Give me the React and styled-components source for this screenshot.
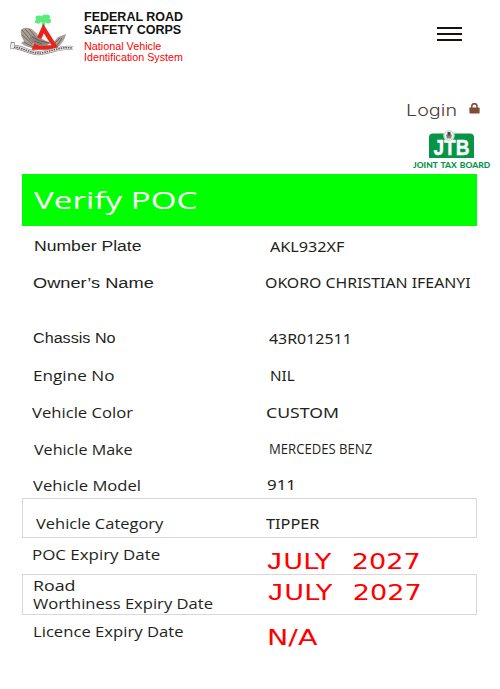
import React, { useLayoutEffect, useRef, useState } from "react";
import styled, { createGlobalStyle } from "styled-components";

const SANS = '"Open Sans", "Noto Sans", sans-serif';
const HUMANIST = '"Noto Sans", "Open Sans", sans-serif';
const ARIAL = '"Liberation Sans", Arial, sans-serif';
const WIDE = '"DejaVu Sans", Verdana, sans-serif';

const rows = [
  {
    height: 37,
    label: { text: "Number Plate", left: 11, top: 9, width: 108, font: ARIAL },
    value: { text: "AKL932XF", left: 17, top: 10, width: 74 },
  },
  {
    height: 55,
    label: { text: "Owner’s Name", left: 10, top: 9, width: 121, font: ARIAL },
    value: { text: "OKORO CHRISTIAN IFEANYI", left: 12, top: 9, width: 206 },
  },
  {
    height: 37,
    label: { text: "Chassis No", left: 10, top: 9, width: 83, font: ARIAL },
    value: { text: "43R012511", left: 16, top: 10, width: 83 },
  },
  {
    height: 37,
    label: { text: "Engine No", left: 10, top: 10, width: 82 },
    value: { text: "NIL", left: 17, top: 10, width: 25 },
  },
  {
    height: 37,
    label: { text: "Vehicle Color", left: 9, top: 10, width: 101 },
    value: { text: "CUSTOM", left: 13, top: 10, width: 73 },
  },
  {
    height: 37,
    label: { text: "Vehicle Make", left: 11, top: 10, width: 99 },
    value: { text: "MERCEDES BENZ", left: 16, top: 9, width: 103, font: SANS },
  },
  {
    height: 32,
    label: { text: "Vehicle Model", left: 10, top: 9, width: 108 },
    value: { text: "911", left: 14, top: 8, width: 29 },
  },
  {
    height: 40,
    boxed: true,
    label: { text: "Vehicle Category", left: 13, top: 15, width: 127 },
    value: { text: "TIPPER", left: 13, top: 15, width: 53, size: 13.5 },
  },
  {
    height: 36,
    label: { text: "POC Expiry Date", left: 9, top: 6, width: 128 },
    value: { text: "JULY 2027", left: 12, top: 13, width: 156, date: true },
  },
  {
    height: 41,
    boxed: true,
    label: { text: "Road", left: 10, top: 1, width: 42 },
    label2: { text: "Worthiness Expiry Date", left: 10, top: -2, width: 180 },
    value: { text: "JULY 2027", left: 13, top: 8, width: 156, date: true },
  },
  {
    height: 40,
    label: { text: "Licence Expiry Date", left: 10, top: 6, width: 151 },
    value: { text: "N/A", left: 14, top: 12, width: 50, alert: true, size: 20.5, font: WIDE },
  },
];

// stretches a single line of text to the given width
const FitText = ({ width, children, ...rest }) => {
  const ref = useRef(null);
  const [scale, setScale] = useState(1);

  useLayoutEffect(() => {
    setScale(width / ref.current.offsetWidth);
  }, [width]);

  return (
    <StyledFit $width={width} {...rest}>
      <StyledFitInner ref={ref} style={{ transform: `scaleX(${scale})` }}>
        {children}
      </StyledFitInner>
    </StyledFit>
  );
};

const Cell = ({ item, label }) => (
  <StyledCell
    width={item.width}
    $left={item.left}
    $top={item.top}
    $size={item.size || (item.date ? 21 : 14)}
    $font={item.font || (item.date ? WIDE : label ? SANS : HUMANIST)}
    $alert={item.alert || item.date}
  >
    {item.date ? (
      <>
        <StyledJ>J</StyledJ>ULY<StyledGap />2027
      </>
    ) : (
      item.text
    )}
  </StyledCell>
);

const Crest = () => (
  <svg width="66" height="44" viewBox="0 0 66 44">
    <g fill="#5bea7b">
      <ellipse cx="29" cy="5" rx="3.500" ry="2.400" />
      <ellipse cx="36" cy="4" rx="4" ry="2.400" />
      <ellipse cx="28" cy="8.500" rx="3" ry="2" />
      <ellipse cx="38" cy="8" rx="3" ry="2.400" />
      <ellipse cx="33" cy="7" rx="4" ry="2" />
      <path d="M32 7h3v6h-3z" />
    </g>
    <path
      d="M11 17c2-3 8-3 12 0 4 3 7 7 9 11l9 4 7-8 8-3c-1 5-4 10-9 14H22c-5-1-9-3-11-5l3-2c-2-3-4-7-3-11z"
      fill="#aaa099"
    />
    <path
      d="M12 17l11 13M15 16l12 13M19 16l10 12M12 22l10 9M14 29l9 5M42 33l8-8M46 34l6-9"
      stroke="#6d5d54"
      strokeWidth="0.900"
      fill="none"
    />
    <path
      d="M33.500 15.500L45.500 34.500H25z"
      fill="#f6eeea"
      stroke="#e6241b"
      strokeWidth="4.400"
    />
    <path d="M20 22c6 1 11 4 16 6l5 2-6 3-8-1-7-4z" fill="#93857d" />
    <path d="M22 24l8 4 9 2M24 28l8 3" stroke="#5c4d45" strokeWidth="0.800" fill="none" />
    <path
      d="M3 29l-1 5c8-1 15 5 25 6s22-7 36-5"
      fill="none"
      stroke="#8c8784"
      strokeWidth="4.200"
    />
    <path
      d="M3 30l-1 4c8-1 15 5 25 6s22-7 36-5"
      fill="none"
      stroke="#f0eeed"
      strokeWidth="2.800"
    />
    <path
      d="M4 34.200c7 0 14 4.800 23 5.800s22-7 35-5"
      fill="none"
      stroke="#5a5755"
      strokeWidth="1.600"
      strokeDasharray="1.500 0.900"
    />
  </svg>
);

const Lock = () => (
  <svg width="11" height="11" viewBox="0 0 11 11">
    <path d="M2.800 5V3.300a2.600 2.600 0 0 1 5.200 0V5" fill="none" stroke="#7f4c38" strokeWidth="1.500" />
    <rect x="0.400" y="4.400" width="10.200" height="6.200" rx="0.800" fill="#7f4c38" />
  </svg>
);

const TaxBadge = () => (
  <svg width="45" height="29" viewBox="0 0 45 29">
    <path d="M4 3.500h37a4 4 0 0 1 4 4V28H0V7.500a4 4 0 0 1 4-4z" fill="#079447" />
    <text
      x="4.500"
      y="24.500"
      textLength="36"
      lengthAdjust="spacingAndGlyphs"
      fontFamily="Liberation Sans"
      fontWeight="bold"
      fontSize="21.500"
      fill="#fff"
      stroke="#fff"
      strokeWidth="0.400"
    >
      JTB
    </text>
    <circle cx="20" cy="5.500" r="5.600" fill="#f3f5f1" />
    <circle cx="20" cy="5.500" r="4.900" fill="none" stroke="#a9cdb4" strokeWidth="0.700" />
    <path d="M17 4.500l3 .5 3-.5-.8 4h-4.400z" fill="#85887f" />
    <path d="M18.500 2h3v3.500h-3z" fill="#444" />
  </svg>
);

const App = () => (
  <StyledPage>
    <GlobalStyle />
    <StyledHeader>
      <StyledBrand>
        <Crest />
        <StyledBrandText>
          <StyledOrg width={99}>FEDERAL ROAD</StyledOrg>
          <StyledOrg width={97}>SAFETY CORPS</StyledOrg>
          <StyledSystem width={77}>National Vehicle</StyledSystem>
          <StyledSystem width={99}>Identification System</StyledSystem>
        </StyledBrandText>
      </StyledBrand>
      <StyledMenu aria-label="Menu">
        <StyledBar />
        <StyledBar />
        <StyledBar />
      </StyledMenu>
    </StyledHeader>
    <StyledAccount>
      <StyledLogin>
        <StyledLoginText width={51}>Login</StyledLoginText>
        <Lock />
      </StyledLogin>
      <StyledBoard>
        <TaxBadge />
        <StyledBoardText width={77}>JOINT TAX BOARD</StyledBoardText>
      </StyledBoard>
    </StyledAccount>
    <StyledBanner>
      <StyledTitle width={163}>Verify POC</StyledTitle>
    </StyledBanner>
    <StyledTable>
      {rows.map((row) => (
        <StyledRow key={row.label.text} $height={row.height} $boxed={row.boxed}>
          <div>
            <Cell item={row.label} label />
            {row.label2 && <Cell item={row.label2} label />}
          </div>
          <div>
            <Cell item={row.value} />
          </div>
        </StyledRow>
      ))}
    </StyledTable>
  </StyledPage>
);

const GlobalStyle = createGlobalStyle`
  * {
    box-sizing: border-box;
  }
  body {
    margin: 0;
    background: #ffffff;
  }
`;

const StyledPage = styled.main`
  width: 500px;
  height: 689px;
  display: flex;
  flex-direction: column;
  overflow: hidden;
  background: #ffffff;
`;

const StyledFit = styled.div`
  width: ${(props) => props.$width}px;
  white-space: pre;
`;

const StyledFitInner = styled.span`
  display: inline-block;
  transform-origin: 0 50%;
`;

const StyledHeader = styled.header`
  height: 98px;
  padding: 11px 38px 0 10px;
  display: flex;
  justify-content: space-between;
`;

const StyledBrand = styled.div`
  display: flex;
  align-items: flex-start;
  svg {
    margin-top: 2px;
  }
`;

const StyledBrandText = styled.div`
  margin-left: 8px;
  font-family: ${ARIAL};
`;

const StyledOrg = styled(FitText)`
  height: 13px;
  line-height: 13px;
  font-size: 12px;
  font-weight: bold;
  color: #111111;
  & + & {
    margin-bottom: 4px;
  }
`;

const StyledSystem = styled(FitText)`
  height: 11px;
  line-height: 11px;
  font-size: 10.5px;
  color: #ff0000;
`;

const StyledMenu = styled.button`
  width: 25px;
  height: 14px;
  margin-top: 16px;
  padding: 0;
  border: 0;
  background: none;
  display: flex;
  flex-direction: column;
  justify-content: space-between;
`;

const StyledBar = styled.span`
  width: 25px;
  height: 2px;
  background: #17120f;
`;

const StyledAccount = styled.section`
  height: 76px;
  padding-right: 10px;
  display: flex;
  flex-direction: column;
  align-items: flex-end;
`;

const StyledLogin = styled.a`
  height: 32px;
  padding: 5px 10px 0 0;
  display: flex;
  gap: 12px;
`;

const StyledLoginText = styled(FitText)`
  height: 20px;
  line-height: 16px;
  font-family: Inter, sans-serif;
  font-size: 15.5px;
  font-weight: 300;
  color: #4c403d;
`;

const StyledBoard = styled.div`
  width: 77px;
  display: flex;
  flex-direction: column;
  align-items: center;
`;

const StyledBoardText = styled(FitText)`
  margin-top: 2px;
  line-height: 9px;
  font-family: Lato, sans-serif;
  font-size: 7.5px;
  font-weight: 900;
  word-spacing: 1px;
  color: #079447;
`;

const StyledBanner = styled.section`
  height: 52px;
  margin: 0 23px 0 22px;
  padding: 10px 0 0 12px;
  background: #00ff00;
`;

const StyledTitle = styled(FitText)`
  line-height: 32px;
  font-family: ${SANS};
  font-size: 23px;
  color: #ffffff;
`;

const StyledTable = styled.section`
  margin: 0 23px 0 22px;
`;

const StyledRow = styled.div`
  height: ${(props) => props.$height}px;
  border: 1px solid ${(props) => (props.$boxed ? "#d8d8d8" : "transparent")};
  display: grid;
  grid-template-columns: 230px 1fr;
`;

const StyledCell = styled(FitText)`
  height: 20px;
  line-height: 20px;
  margin: ${(props) => props.$top}px 0 0 ${(props) => props.$left}px;
  font-family: ${(props) => props.$font};
  font-size: ${(props) => props.$size}px;
  color: ${(props) => (props.$alert ? "#ff0000" : "#231f20")};
`;

const StyledJ = styled.span`
  font-family: "Liberation Mono", monospace;
  font-size: 1.13em;
  line-height: 1px;
`;

const StyledGap = styled.span`
  display: inline-block;
  width: 16px;
`;

export default App;
